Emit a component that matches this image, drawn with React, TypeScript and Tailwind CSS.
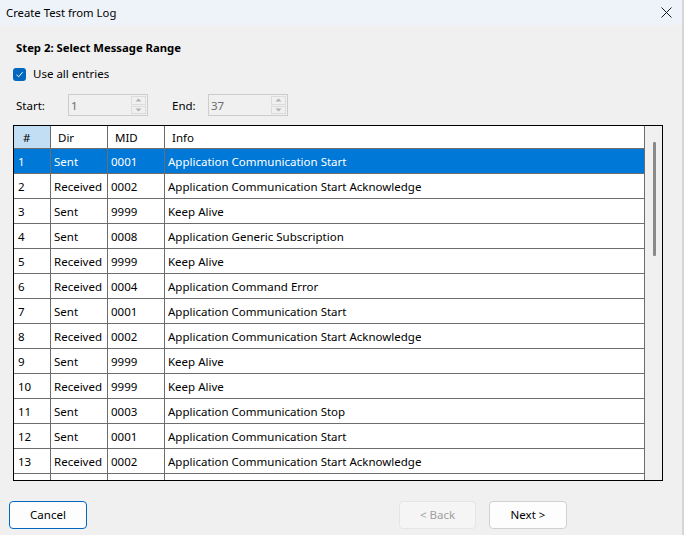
import React from "react";

const rows: [string, string, string, string][] = [
  ["1", "Sent", "0001", "Application Communication Start"],
  ["2", "Received", "0002", "Application Communication Start Acknowledge"],
  ["3", "Sent", "9999", "Keep Alive"],
  ["4", "Sent", "0008", "Application Generic Subscription"],
  ["5", "Received", "9999", "Keep Alive"],
  ["6", "Received", "0004", "Application Command Error"],
  ["7", "Sent", "0001", "Application Communication Start"],
  ["8", "Received", "0002", "Application Communication Start Acknowledge"],
  ["9", "Sent", "9999", "Keep Alive"],
  ["10", "Received", "9999", "Keep Alive"],
  ["11", "Sent", "0003", "Application Communication Stop"],
  ["12", "Sent", "0001", "Application Communication Start"],
  ["13", "Received", "0002", "Application Communication Start Acknowledge"],
  ["", "", "", ""],
];

function SpinBox({ value }: { value: string }) {
  return (
    <div className="w-[80px] h-[22px] border border-[#cccccc] bg-[#f0f0f0] flex items-stretch">
      <div className="flex-1 pl-[2px] text-[#6d6d6d] leading-[21px]">{value}</div>
      <div className="w-[15px] my-[1px] mr-[1px] flex flex-col gap-[1px]">
        <div className="flex-1 border border-[#dcdcdc] flex items-center justify-center">
          <svg width="7" height="4" viewBox="0 0 7 4">
            <path d="M0.5 3.5 L3.5 0.5 L6.5 3.5 Z" fill="#b0b0b0" />
          </svg>
        </div>
        <div className="flex-1 border border-[#dcdcdc] flex items-center justify-center">
          <svg width="7" height="4" viewBox="0 0 7 4">
            <path d="M0.5 0.5 L3.5 3.5 L6.5 0.5 Z" fill="#b0b0b0" />
          </svg>
        </div>
      </div>
    </div>
  );
}

export default function App() {
  return (
    <div
      className="w-[684px] h-[535px] bg-[#f0f0f0] flex text-[11.5px] text-black overflow-hidden"
      style={{ fontFamily: '"Noto Sans", "Open Sans", sans-serif' }}
    >
      <div className="flex-1 flex flex-col">
        <div className="h-[25px] bg-[#eef2f9] flex items-center justify-between pl-[6px] pr-[10px]">
          <span className="leading-[16px] text-[11.3px]">Create Test from Log</span>
          <svg width="11" height="11" viewBox="0 0 11 11">
            <path d="M0.5 0.5 L10.5 10.5 M10.5 0.5 L0.5 10.5" stroke="#1a1a1a" strokeWidth="1" />
          </svg>
        </div>

        <div className="mt-[15px] ml-[16px] font-bold leading-[16px] text-[11.3px]">Step 2: Select Message Range</div>

        <div className="mt-[10px] ml-[13px] flex items-center gap-[7px] h-[16px]">
          <div className="w-[13px] h-[13px] rounded-[3px] bg-[#0067c0] flex items-center justify-center">
            <svg width="9" height="9" viewBox="0 0 9 9">
              <path d="M1.5 4.8 L3.6 6.8 L7.6 2.2" stroke="white" strokeWidth="1" fill="none" />
            </svg>
          </div>
          <span className="leading-[16px]">Use all entries</span>
        </div>

        <div className="mt-[12px] ml-[16px] flex items-center">
          <span className="w-[52px] pt-[1px]">Start:</span>
          <SpinBox value="1" />
          <span className="ml-[24px] w-[36px] pt-[1px]">End:</span>
          <SpinBox value="37" />
        </div>

        <div className="mt-[9px] ml-[13px] w-[650px] h-[356px] border border-black bg-white flex overflow-hidden">
          <div className="w-[631px] flex flex-col border-r border-[#6d6d6d]">
            <div className="h-[23px] flex border-b border-[#6d6d6d] shrink-0">
              <div className="w-[37px] bg-[#c2def4] border-r border-[#6d6d6d] pl-[9px] leading-[24px]">#</div>
              <div className="w-[57px] border-r border-[#6d6d6d] pl-[7px] leading-[24px]">Dir</div>
              <div className="w-[57px] border-r border-[#6d6d6d] pl-[7px] leading-[24px]">MID</div>
              <div className="flex-1 pl-[7px] leading-[24px]">Info</div>
            </div>
            {rows.map((r, i) => {
              const sel = i === 0;
              return (
                <div
                  key={i}
                  className={
                    "h-[25px] flex border-b border-[#6d6d6d] shrink-0 " +
                    (sel ? "bg-[#0078d7] text-white" : "")
                  }
                >
                  <div className="w-[37px] border-r border-[#6d6d6d] pl-[4px] leading-[26px]">{r[0]}</div>
                  <div className="w-[57px] border-r border-[#6d6d6d] pl-[3px] leading-[26px]">{r[1]}</div>
                  <div className="w-[57px] border-r border-[#6d6d6d] pl-[3px] leading-[26px]">{r[2]}</div>
                  <div className="flex-1 pl-[3px] leading-[26px] whitespace-nowrap">{r[3]}</div>
                </div>
              );
            })}
          </div>
          <div className="flex-1 bg-[#f0f0f0] flex justify-center pt-[16px]">
            <div className="w-[3px] h-[114px] bg-[#8a8a8a] rounded-[1px] ml-[1px]" />
          </div>
        </div>

        <div className="mt-[20px] flex items-center">
          <button className="ml-[9px] w-[78px] h-[28px] rounded-[4px] border border-[#0067c0] bg-[#fdfdfd] leading-[26px]">
            Cancel
          </button>
          <button className="ml-[312px] w-[77px] h-[28px] rounded-[4px] border border-[#e5e5e5] bg-[#f5f5f5] text-[#a0a0a0] leading-[26px]">
            &lt; Back
          </button>
          <button className="ml-[13px] w-[78px] h-[28px] rounded-[4px] border border-[#d0d0d0] bg-[#fdfdfd] leading-[26px]">
            Next &gt;
          </button>
        </div>
      </div>
      <div className="w-[2px] bg-[#d6d6d6]" />
    </div>
  );
}
